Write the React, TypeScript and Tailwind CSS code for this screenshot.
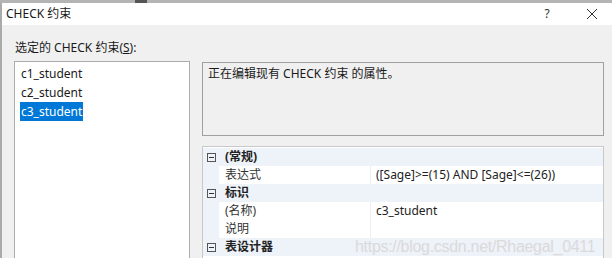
import React from "react";

const font = { fontFamily: '"Segoe UI", "Noto Sans", "Noto Sans CJK SC", sans-serif' };

function Row({ cat, name, value }: { cat?: boolean; name: string; value?: string }) {
  if (cat) {
    return (
      <div className="flex h-[18px] items-center bg-[#eef2f9]">
        <div className="w-[16px] flex justify-center">
          <div className="w-[9px] h-[9px] border border-[#555] flex items-center justify-center">
            <div className="w-[5px] h-px bg-[#333]" />
          </div>
        </div>
        <div className="pl-[6px] font-bold text-[#222]">{name}</div>
      </div>
    );
  }
  return (
    <div className="flex h-[18px] items-center">
      <div className="w-[16px] self-stretch bg-[#eef2f9]" />
      <div className="w-[152px] self-stretch flex items-center pl-[6px] bg-white border-r border-[#eee] text-[#333]">{name}</div>
      <div className="flex-1 self-stretch flex items-center pl-[5px] bg-white text-[#222]">{value}</div>
    </div>
  );
}

export default function App() {
  return (
    <div className="w-[612px] h-[258px] overflow-hidden bg-[#f0f0f0] text-[12px] text-[#1a1a1a] flex flex-col relative" style={font}>
      <div className="h-[3px] bg-[#b4b4b4] flex">
        <div className="w-[135px]" />
        <div className="w-[12px] bg-[#555]" />
      </div>
      <div className="h-[22px] bg-white flex items-center pl-[4px] pr-[14px] border-l-2 border-[#aaa]">
        <div className="flex-1 text-[12px]">CHECK 约束</div>
        <div className="w-[14px] text-center text-[#333] mr-[32px]">?</div>
        <svg width="12" height="12" viewBox="0 0 12 12">
          <path d="M1 1 L11 11 M11 1 L1 11" stroke="#333" strokeWidth="1" />
        </svg>
      </div>
      <div className="flex-1 flex flex-col border-l-2 border-[#aaa] pl-[12px] pr-[8px]">
        <div className="h-[36px] flex items-end pb-[4px] pl-[1px]">
          <span>选定的 CHECK 约束(<span className="underline">S</span>):</span>
        </div>
        <div className="flex-1 flex gap-[12px]">
          <div className="w-[176px] bg-white border border-[#acacac] border-b-0 pt-[2px] pl-[5px] flex flex-col items-start">
            <div className="h-[19px] flex items-center px-[1px]">c1_student</div>
            <div className="h-[19px] flex items-center px-[1px]">c2_student</div>
            <div className="h-[19px] flex items-center px-[1px] bg-[#0078d7] text-white">c3_student</div>
          </div>
          <div className="flex-1 flex flex-col">
            <div className="h-[74px] mt-[1px] border border-[#a0a0a0] pl-[5px] pt-[2px]">正在编辑现有 CHECK 约束 的属性。</div>
            <div className="flex-1 mt-[10px] border border-[#c8c8c8] border-b-0 bg-white flex flex-col pt-px">
              <Row cat name="(常规)" />
              <Row name="表达式" value="([Sage]>=(15) AND [Sage]<=(26))" />
              <Row cat name="标识" />
              <Row name="(名称)" value="c3_student" />
              <Row name="说明" />
              <Row cat name="表设计器" />
            </div>
          </div>
        </div>
      </div>
      <div className="absolute left-[355px] top-[235px] text-[16px] text-[#dadada] tracking-[-0.3px]" style={{ fontFamily: '"Liberation Sans", Arial, sans-serif' }}>
        https://blog.csdn.net/Rhaegal_0411
      </div>
    </div>
  );
}
